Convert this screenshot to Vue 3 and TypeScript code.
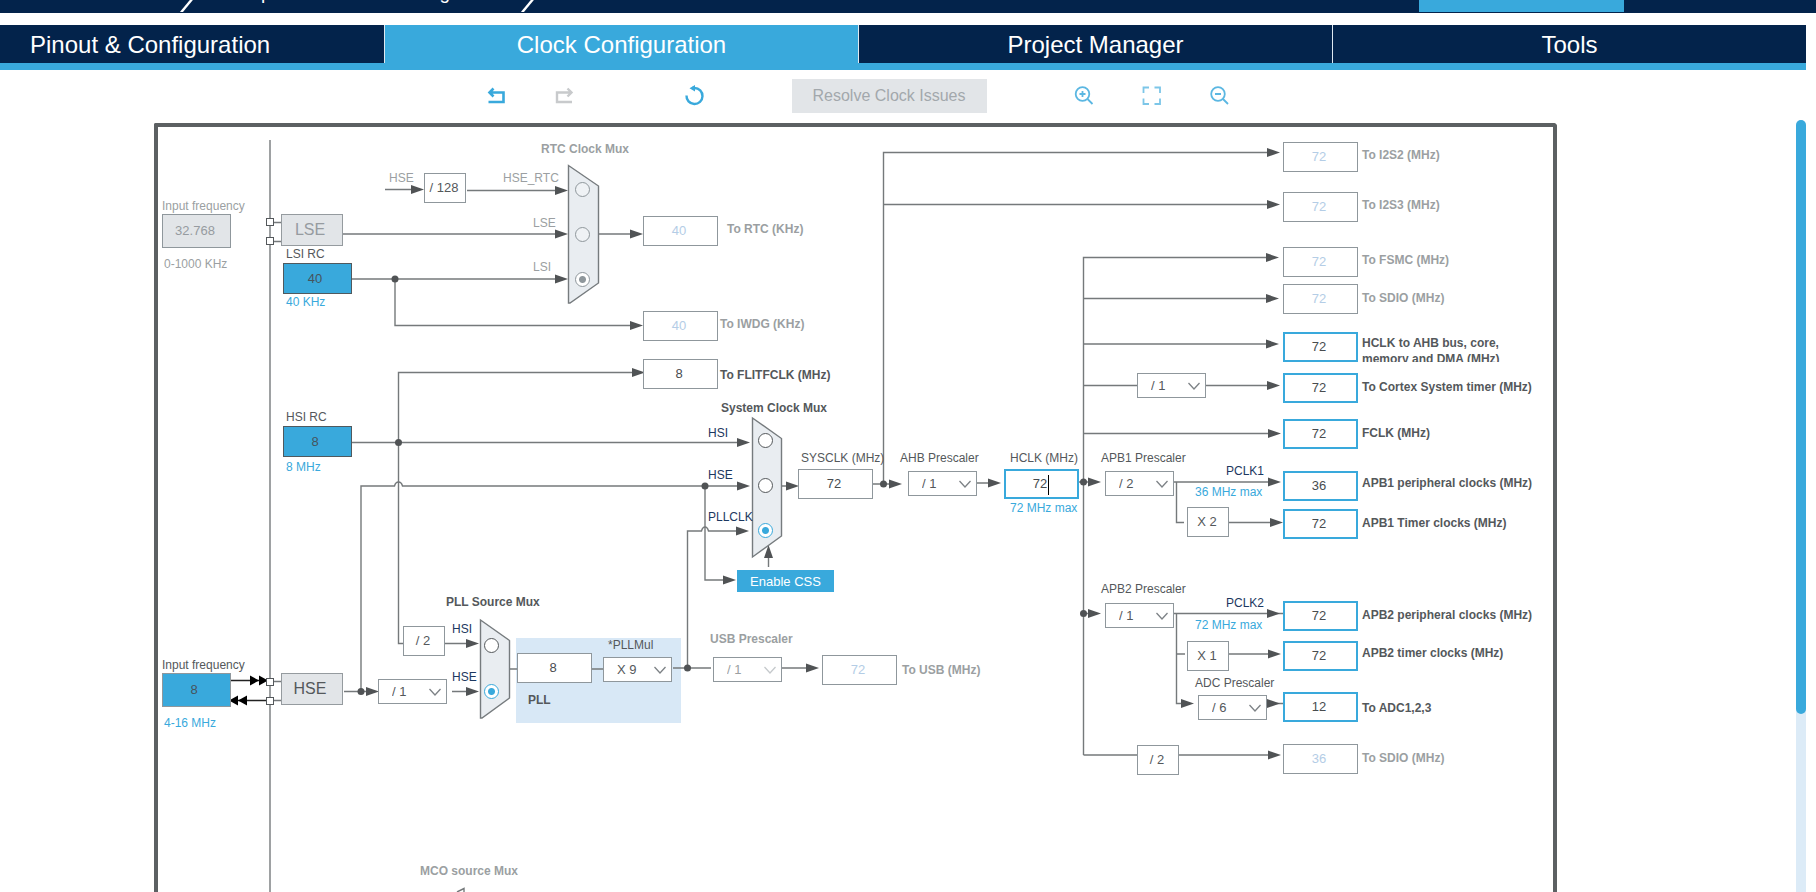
<script setup lang="ts">
import { reactive, ref } from 'vue'

type Tone = 'dark' | 'muted' | 'blue' | 'navy'

interface Label { x: number; y: number; text: string; tone?: Tone; bold?: boolean; for?: string; wide?: boolean }
interface Field { id: string; x: number; y: number; w: number; h: number; value: string; kind: string; name: string; disabled?: boolean }
interface Picker { id: string; x: number; y: number; value: string; options: string[]; disabled?: boolean; name: string }
interface Ratio { x: number; y: number; text: string }
interface Choice { id: string; x: number; y: number; value: string }
interface Mux { name: string; shape: string; disabled?: boolean; picked: string; choices: Choice[] }
interface Arrow { x: number; y: number; turn?: number; black?: boolean }

/* Sheet coordinates of the visible top-left corner. */
const originX = 158
const originY = 127

const tabs = ['Pinout & Configuration', 'Clock Configuration', 'Project Manager', 'Tools']
const activeTab = ref('Clock Configuration')

const place = (x: number, y: number) => ({ left: `${x - originX}px`, top: `${y - originY}px` })
const placeBox = (b: { x: number; y: number; w: number; h: number }) => ({
  ...place(b.x, b.y), width: `${b.w}px`, height: `${b.h}px`,
})

const labels: Label[] = [
  { x: 162, y: 206, text: 'Input frequency', tone: 'muted', for: 'lse-in' },
  { x: 164, y: 264, text: '0-1000 KHz', tone: 'muted' },
  { x: 286, y: 254, text: 'LSI RC', for: 'lsi' },
  { x: 286, y: 302, text: '40 KHz', tone: 'blue' },
  { x: 389, y: 178, text: 'HSE', tone: 'muted' },
  { x: 503, y: 178, text: 'HSE_RTC', tone: 'muted', for: 'rtc-hse' },
  { x: 533, y: 223, text: 'LSE', tone: 'muted', for: 'rtc-lse' },
  { x: 533, y: 267, text: 'LSI', tone: 'muted', for: 'rtc-lsi' },
  { x: 541, y: 149, text: 'RTC Clock Mux', tone: 'muted', bold: true },
  { x: 727, y: 229, text: 'To RTC (KHz)', tone: 'muted', bold: true, for: 'rtc' },
  { x: 720, y: 324, text: 'To IWDG (KHz)', tone: 'muted', bold: true, for: 'iwdg' },
  { x: 720, y: 375, text: 'To FLITFCLK (MHz)', bold: true, for: 'flitf' },
  { x: 721, y: 408, text: 'System Clock Mux', bold: true },
  { x: 708, y: 433, text: 'HSI', tone: 'navy', for: 'sys-hsi' },
  { x: 708, y: 475, text: 'HSE', tone: 'navy', for: 'sys-hse' },
  { x: 708, y: 517, text: 'PLLCLK', tone: 'navy', for: 'sys-pll' },
  { x: 286, y: 417, text: 'HSI RC', for: 'hsi' },
  { x: 286, y: 467, text: '8 MHz', tone: 'blue' },
  { x: 446, y: 602, text: 'PLL Source Mux', bold: true },
  { x: 452, y: 629, text: 'HSI', tone: 'navy', for: 'pll-hsi' },
  { x: 452, y: 677, text: 'HSE', tone: 'navy', for: 'pll-hse' },
  { x: 162, y: 665, text: 'Input frequency', for: 'hse-in' },
  { x: 164, y: 723, text: '4-16 MHz', tone: 'blue' },
  { x: 608, y: 645, text: '*PLLMul', for: 'pllmul' },
  { x: 528, y: 700, text: 'PLL', bold: true, for: 'pll' },
  { x: 710, y: 639, text: 'USB Prescaler', tone: 'muted', bold: true, for: 'usbdiv' },
  { x: 902, y: 670, text: 'To USB (MHz)', tone: 'muted', bold: true, for: 'usb' },
  { x: 420, y: 871, text: 'MCO source Mux', tone: 'muted', bold: true },
  { x: 801, y: 458, text: 'SYSCLK (MHz)', for: 'sysclk' },
  { x: 900, y: 458, text: 'AHB Prescaler', for: 'ahb' },
  { x: 1010, y: 458, text: 'HCLK (MHz)', for: 'hclk' },
  { x: 1010, y: 508, text: '72 MHz max', tone: 'blue' },
  { x: 1101, y: 458, text: 'APB1 Prescaler', for: 'apb1' },
  { x: 1226, y: 471, text: 'PCLK1', tone: 'navy' },
  { x: 1195, y: 492, text: '36 MHz max', tone: 'blue' },
  { x: 1101, y: 589, text: 'APB2 Prescaler', for: 'apb2' },
  { x: 1226, y: 603, text: 'PCLK2', tone: 'navy' },
  { x: 1195, y: 625, text: '72 MHz max', tone: 'blue' },
  { x: 1195, y: 683, text: 'ADC Prescaler', for: 'adcdiv' },
  { x: 1362, y: 155, text: 'To I2S2 (MHz)', tone: 'muted', bold: true, for: 'i2s2' },
  { x: 1362, y: 205, text: 'To I2S3 (MHz)', tone: 'muted', bold: true, for: 'i2s3' },
  { x: 1362, y: 260, text: 'To FSMC (MHz)', tone: 'muted', bold: true, for: 'fsmc' },
  { x: 1362, y: 298, text: 'To SDIO (MHz)', tone: 'muted', bold: true, for: 'sdio' },
  { x: 1362, y: 343, text: 'HCLK to AHB bus, core, memory and DMA (MHz)', bold: true, for: 'ahbbus', wide: true },
  { x: 1362, y: 387, text: 'To Cortex System timer (MHz)', bold: true, for: 'cortex' },
  { x: 1362, y: 433, text: 'FCLK (MHz)', bold: true, for: 'fclk' },
  { x: 1362, y: 483, text: 'APB1 peripheral clocks (MHz)', bold: true, for: 'apb1p' },
  { x: 1362, y: 523, text: 'APB1 Timer clocks (MHz)', bold: true, for: 'apb1t' },
  { x: 1362, y: 615, text: 'APB2 peripheral clocks (MHz)', bold: true, for: 'apb2p' },
  { x: 1362, y: 653, text: 'APB2 timer clocks (MHz)', bold: true, for: 'apb2t' },
  { x: 1362, y: 708, text: 'To ADC1,2,3', bold: true, for: 'adc' },
  { x: 1362, y: 758, text: 'To SDIO (MHz)', tone: 'muted', bold: true, for: 'sdio2' },
]

const output = (id: string, y: number, name: string, value = '72', kind = 'used'): Field => ({
  id, x: 1283, y, w: 75, h: 30, value, kind, name, disabled: kind === 'off',
})

const fields = reactive<Field[]>([
  { id: 'lse-in', x: 162, y: 214, w: 69, h: 34, value: '32.768', kind: 'inactive', name: 'LSE input frequency', disabled: true },
  { id: 'lsi', x: 283, y: 263, w: 69, h: 31, value: '40', kind: 'source', name: 'LSI RC' },
  { id: 'hsi', x: 283, y: 426, w: 69, h: 31, value: '8', kind: 'source', name: 'HSI RC' },
  { id: 'hse-in', x: 162, y: 673, w: 69, h: 34, value: '8', kind: 'source entry', name: 'HSE input frequency' },
  { id: 'rtc', x: 643, y: 216, w: 75, h: 30, value: '40', kind: 'off', name: 'RTC clock', disabled: true },
  { id: 'iwdg', x: 643, y: 311, w: 75, h: 30, value: '40', kind: 'off', name: 'IWDG clock', disabled: true },
  { id: 'flitf', x: 643, y: 359, w: 75, h: 30, value: '8', kind: 'plain', name: 'FLITFCLK' },
  { id: 'sysclk', x: 798, y: 469, w: 75, h: 30, value: '72', kind: 'plain', name: 'SYSCLK' },
  { id: 'hclk', x: 1004, y: 469, w: 75, h: 30, value: '72', kind: 'used', name: 'HCLK' },
  { id: 'pll', x: 517, y: 653, w: 75, h: 30, value: '8', kind: 'plain', name: 'PLL input' },
  { id: 'usb', x: 822, y: 655, w: 75, h: 30, value: '72', kind: 'off', name: 'USB clock', disabled: true },
  output('i2s2', 142, 'I2S2', '72', 'off'),
  output('i2s3', 192, 'I2S3', '72', 'off'),
  output('fsmc', 247, 'FSMC', '72', 'off'),
  output('sdio', 284, 'SDIO', '72', 'off'),
  output('ahbbus', 332, 'AHB bus'),
  output('cortex', 373, 'Cortex system timer'),
  output('fclk', 419, 'FCLK'),
  output('apb1p', 471, 'APB1 peripheral', '36'),
  output('apb1t', 509, 'APB1 timer'),
  output('apb2p', 601, 'APB2 peripheral'),
  output('apb2t', 641, 'APB2 timer'),
  output('adc', 692, 'ADC', '12'),
  output('sdio2', 744, 'SDIO half rate', '36', 'off'),
])

const powers = ['/ 1', '/ 2', '/ 4', '/ 8', '/ 16']
const pickers = reactive<Picker[]>([
  { id: 'hsediv', x: 378, y: 679, value: '/ 1', options: ['/ 1', '/ 2'], name: 'HSE divider' },
  { id: 'pllmul', x: 603, y: 657, value: 'X 9', options: ['X 2', 'X 4', 'X 8', 'X 9', 'X 16'], name: 'PLL multiplier' },
  { id: 'usbdiv', x: 713, y: 657, value: '/ 1', options: ['/ 1', '/ 1.5'], disabled: true, name: 'USB prescaler' },
  { id: 'ahb', x: 908, y: 471, value: '/ 1', options: powers, name: 'AHB prescaler' },
  { id: 'cortexdiv', x: 1137, y: 373, value: '/ 1', options: ['/ 1', '/ 8'], name: 'Cortex timer divider' },
  { id: 'apb1', x: 1105, y: 471, value: '/ 2', options: powers, name: 'APB1 prescaler' },
  { id: 'apb2', x: 1105, y: 603, value: '/ 1', options: powers, name: 'APB2 prescaler' },
  { id: 'adcdiv', x: 1198, y: 695, value: '/ 6', options: ['/ 2', '/ 4', '/ 6', '/ 8'], name: 'ADC prescaler' },
])

const ratios: Ratio[] = [
  { x: 424, y: 173, text: '/ 128' },
  { x: 403, y: 626, text: '/ 2' },
  { x: 1187, y: 507, text: 'X 2' },
  { x: 1187, y: 641, text: 'X 1' },
  { x: 1137, y: 745, text: '/ 2' },
]

const muxes = reactive<Mux[]>([
  {
    name: 'rtc-mux', disabled: true, picked: 'LSI', shape: '568.5,165.5 598.5,186 598.5,283 570,303 568.5,303',
    choices: [
      { id: 'rtc-hse', x: 583, y: 190, value: 'HSE_RTC' },
      { id: 'rtc-lse', x: 583, y: 235, value: 'LSE' },
      { id: 'rtc-lsi', x: 583, y: 280, value: 'LSI' },
    ],
  },
  {
    name: 'sys-mux', picked: 'PLLCLK', shape: '752.5,418 781.5,438.5 781.5,536 752.5,557',
    choices: [
      { id: 'sys-hsi', x: 766, y: 441, value: 'HSI' },
      { id: 'sys-hse', x: 766, y: 486, value: 'HSE' },
      { id: 'sys-pll', x: 766, y: 531, value: 'PLLCLK' },
    ],
  },
  {
    name: 'pll-mux', picked: 'HSE', shape: '480.5,620 509.5,640.5 509.5,698 482,718 480.5,718',
    choices: [
      { id: 'pll-hsi', x: 492, y: 646, value: 'HSI' },
      { id: 'pll-hse', x: 492, y: 692, value: 'HSE' },
    ],
  },
])

const wires: string[] = [
  'M270 140V900',
  'M274 222.5H281M274 241.5H281M274 681.5H281M274 700.5H281',
  'M343 234H560',
  'M352 279H560M395 279V325.5H635',
  'M385 189.5H416M467 190.5H560',
  'M598 234H635',
  'M635 372.5H398.5V643.5H403',
  'M352 442.5H742',
  'M361 691.5V486H394.5Q395.5 482 398.5 482Q401.5 482 402.5 486H742',
  'M344 691.5H370M452 691.5H470M445 643.5H470',
  'M509 669H517M592 669H603M673 668H711M781 668H812',
  'M687.5 668V531H701.5Q702.5 527 705 527Q707.5 527 708.5 531H742',
  'M705 486V580H728',
  'M768.5 567V552',
  'M781 486H792M873 484H894M976 483H994',
  'M883.5 484V152.5H1272M883.5 204.5H1272',
  'M1083.5 755V257.5H1270M1083.5 298.5H1270M1083.5 344H1270M1083.5 385.5H1137M1205 385.5H1272M1083.5 433.5H1274',
  'M1079 482H1092M1174 482H1272M1176.5 482V522.5H1184M1229 522.5H1274',
  'M1083.5 613.5H1092M1174 613.5H1283M1176.5 613.5V703.5H1186M1176.5 654H1185M1229 654H1272M1267 703.5H1283',
  'M1083.5 755H1137M1179 755H1272',
]

const arrows: Arrow[] = [
  { x: 424, y: 189.5 }, { x: 568, y: 190.5 }, { x: 568, y: 234 }, { x: 568, y: 279 },
  { x: 643, y: 234 }, { x: 643, y: 325.5 }, { x: 645, y: 372.5 },
  { x: 750, y: 442.5 }, { x: 750, y: 486 }, { x: 749, y: 531 }, { x: 736, y: 580 },
  { x: 768.5, y: 545, turn: -90 },
  { x: 799, y: 486 }, { x: 902, y: 484 }, { x: 1001, y: 483 },
  { x: 479, y: 643.5 }, { x: 479, y: 691.5 }, { x: 379, y: 691.5 }, { x: 819, y: 668 },
  { x: 1280, y: 152.5 }, { x: 1280, y: 204.5 }, { x: 1279, y: 257.5 }, { x: 1279, y: 298.5 },
  { x: 1279, y: 344 }, { x: 1280, y: 385.5 }, { x: 1281, y: 433.5 }, { x: 1281, y: 482 },
  { x: 1283, y: 522.5 }, { x: 1101, y: 482 }, { x: 1101, y: 613.5 }, { x: 1280, y: 613.5 },
  { x: 1281, y: 654 }, { x: 1280, y: 703.5 }, { x: 1194, y: 703.5 }, { x: 1281, y: 755 },
  { x: 259, y: 680.5, black: true }, { x: 268, y: 680.5, black: true },
  { x: 229, y: 700.5, turn: 180, black: true }, { x: 238, y: 700.5, turn: 180, black: true },
]

const dots: [number, number][] = [
  [395, 279], [398.5, 442.5], [361, 691.5], [705, 486], [687.5, 668],
  [883.5, 484], [1083.5, 482], [1083.5, 613.5],
]

const pins: [number, number][] = [[266.5, 218.5], [266.5, 237.5], [266.5, 678.5], [266.5, 697.5]]
</script>

<template>
  <div class="page">
    <header class="crumbs">
      <svg class="slash" viewBox="0 0 16 12"><path d="M13 -2L1 12.500" /></svg>
      <span class="crumb">setup.ioc - Pinout &amp; Configuration</span>
      <svg class="slash" viewBox="0 0 16 12"><path d="M13 -2L1 12.500" /></svg>
      <button class="generate" type="button" aria-label="Generate code"></button>
    </header>

    <nav class="tabs">
      <button
        v-for="tab in tabs" :key="tab" type="button" class="tab"
        :class="{ active: tab === activeTab }" @click="activeTab = tab"
      >{{ tab }}</button>
    </nav>

    <div class="toolbar">
      <button class="icon" type="button" aria-label="Undo">
        <svg viewBox="0 0 20 20"><path d="M3 6.500H16.500V16H1.500M6.500 2.500L2.500 6.500L6.500 10.500" stroke-width="2.600" /></svg>
      </button>
      <button class="icon redo" type="button" aria-label="Redo" disabled>
        <svg viewBox="0 0 20 20"><path d="M16 6.500H2V16H17M12.500 2.500L16.500 6.500L12.500 10.500" stroke-width="2.400" /></svg>
      </button>
      <button class="icon reset" type="button" aria-label="Reset">
        <svg viewBox="0 0 20 20">
          <path d="M1.500 9.500A8 8 0 1 0 9.500 2H7" stroke-width="2.400" />
          <path class="solid" d="M4.500 2.200L10 -1V5.500Z" />
        </svg>
      </button>
      <button class="resolve" type="button" disabled>Resolve Clock Issues</button>
      <button class="icon" type="button" aria-label="Zoom in">
        <svg viewBox="0 0 20 20" class="thin"><circle cx="8.500" cy="8" r="6.800" /><path d="M13.500 13L18.500 18M8.500 5V11M5.500 8H11.500" /></svg>
      </button>
      <button class="icon" type="button" aria-label="Fit to window">
        <svg viewBox="0 0 20 20" class="thin pale"><path d="M7 1.500H1.500V7M12.500 1.500H18V7M1.500 12.500V18H7M18 12.500V18H12.500" /></svg>
      </button>
      <button class="icon" type="button" aria-label="Zoom out">
        <svg viewBox="0 0 20 20" class="thin"><circle cx="8" cy="8" r="6.800" /><path d="M13 13L18 18M5 8H11" /></svg>
      </button>
    </div>

    <main class="workspace">
      <section class="sheet" aria-label="Clock tree">
        <div class="panel" :style="placeBox({ x: 516, y: 638, w: 165, h: 85 })"></div>

        <svg class="wiring" width="1395" height="780">
          <g :transform="`translate(${-originX} ${-originY})`">
            <path v-for="(d, i) in wires" :key="i" :d="d" class="wire" />
            <path class="wire strong" d="M230 680.500H262M270 700.500H232" />
            <path
              v-for="(a, i) in arrows" :key="`a${i}`"
              :d="a.black ? 'M0 0L-9 -5V5Z' : 'M0 0L-13 -4.500V4.500Z'"
              class="head" :class="{ black: a.black }"
              :transform="`translate(${a.x} ${a.y}) rotate(${a.turn ?? 0})`"
            />
            <circle v-for="(d, i) in dots" :key="`d${i}`" :cx="d[0]" :cy="d[1]" r="3.500" class="head" />
            <rect v-for="(p, i) in pins" :key="`p${i}`" :x="p[0]" :y="p[1]" width="7" height="7" class="pin" />
            <polygon v-for="m in muxes" :key="m.name" :points="m.shape" class="mux" />
            <path class="wire" d="M457 892L464 888.500V892" />
          </g>
        </svg>

        <component
          :is="l.for ? 'label' : 'span'" v-for="(l, i) in labels" :key="i" :for="l.for"
          class="label" :class="[l.tone ?? 'dark', { bold: l.bold, wide: l.wide }]"
          :style="place(l.x, l.y - 8)"
        >{{ l.text }}</component>

        <button type="button" class="osc" disabled :style="place(281, 214)">LSE</button>
        <button type="button" class="osc live" :style="place(281, 673)">HSE</button>
        <button type="button" class="css" :style="place(737, 570)">Enable CSS</button>

        <input
          v-for="f in fields" :id="f.id" :key="f.id" v-model="f.value" type="text"
          class="field" :class="f.kind" :style="placeBox(f)" :disabled="f.disabled" :aria-label="f.name"
        >
        <i class="caret" :style="place(1048, 475)"></i>

        <div v-for="(r, i) in ratios" :key="i" class="ratio" :style="place(r.x, r.y)">{{ r.text }}</div>

        <div v-for="p in pickers" :key="p.id" class="picker" :class="{ off: p.disabled }" :style="place(p.x, p.y)">
          <select :id="p.id" v-model="p.value" :disabled="p.disabled" :aria-label="p.name">
            <option v-for="o in p.options" :key="o">{{ o }}</option>
          </select>
          <svg viewBox="0 0 12 8"><path d="M0.500 1L6 7L11.500 1" /></svg>
        </div>

        <template v-for="m in muxes" :key="m.name">
          <input
            v-for="c in m.choices" :id="c.id" :key="c.id" v-model="m.picked" type="radio" class="radio"
            :name="m.name" :value="c.value" :disabled="m.disabled" :aria-label="c.value"
            :style="place(c.x - 8, c.y - 8)"
          >
        </template>
      </section>
      <div class="scroll"><div class="thumb"></div></div>
    </main>
  </div>
</template>

<style>
body { background: #fff; }
</style>

<style scoped>
.page {
  display: flex;
  flex-direction: column;
  height: 100vh;
  overflow: hidden;
  font-family: "Liberation Sans", Arial, sans-serif;
  color: #54585b;
}
.page *, .page *::before { box-sizing: border-box; }
button, input, select { font-family: inherit; margin: 0; padding: 0; }

.crumbs {
  display: flex;
  align-items: flex-end;
  flex: none;
  height: 13px;
  padding: 0 192px 0 180px;
  background: #03234b;
  overflow: hidden;
}
.slash { width: 16px; height: 12px; flex: none; margin-bottom: 1px; }
.slash path { fill: none; stroke: #fff; stroke-width: 2.4; }
.crumb {
  width: 325px;
  padding: 0 0 10px 29px;
  font-size: 19px;
  line-height: 20px;
  color: #fff;
  white-space: nowrap;
}
.generate {
  width: 205px;
  height: 12px;
  margin: 0 0 1px auto;
  border: 0;
  background: #39a9dc;
}

.tabs {
  display: grid;
  grid-template-columns: 384fr 474fr 474fr 474fr;
  flex: none;
  margin: 12px 10px 0 0;
  border-bottom: 7px solid #39a9dc;
}
.tab {
  height: 38px;
  border: 0;
  border-left: 1px solid #dfe8f0;
  background: #03234b;
  color: #fff;
  font-size: 24px;
  line-height: 40px;
}
.tab:first-child { border-left: 0; padding-left: 30px; text-align: left; }
.tab.active { background: #39a9dc; }

.toolbar {
  display: flex;
  align-items: center;
  justify-content: center;
  flex: none;
  gap: 48px;
  height: 53px;
  padding: 0 100px 1px 0;
}
.icon { width: 20px; height: 20px; border: 0; background: none; }
.icon svg { display: block; width: 20px; height: 20px; fill: none; stroke: #39a9dc; overflow: visible; }
.icon .solid { fill: #39a9dc; stroke: none; }
.icon .thin { stroke: #5bb7e2; stroke-width: 1.8; }
.icon .pale { stroke: #7cc6e8; }
.redo svg { stroke: #c8cacc; }
.reset { margin-left: 62px; }
.resolve {
  height: 34px;
  width: 195px;
  margin: 0 39px;
  border: 0;
  background: #e2e5e8;
  color: #a2a8ac;
  font-size: 16px;
}

.workspace {
  display: flex;
  flex: 1;
  min-height: 0;
  padding: 0 10px 0 154px;
}
.sheet {
  position: relative;
  flex: 1;
  border: 4px solid #5c6062;
  border-bottom: 0;
  border-radius: 2px 4px 0 0;
  overflow: hidden;
}
.scroll {
  width: 10px;
  margin: -3px 0 0 239px;
  border-radius: 5px 5px 0 0;
  background: #dcebf7;
}
.thumb { height: 77%; border-radius: 5px; background: #39a9dc; }

.wiring { position: absolute; left: 0; top: 0; }
.wire { fill: none; stroke: #75797b; stroke-width: 1.4; }
.strong { stroke: #222; }
.head { fill: #505355; }
.black { fill: #000; }
.pin { fill: #fff; stroke: #54585b; }
.mux { fill: #e9edf1; stroke: #767b7e; stroke-width: 1.4; }

.panel { position: absolute; background: #d8e8f6; }

.label {
  position: absolute;
  font-size: 12px;
  line-height: 16px;
  white-space: nowrap;
}
.bold { font-weight: bold; }
.muted { color: #9b9fa2; }
.blue { color: #39a9dc; }
.navy { color: #1c3860; }
.wide { width: 160px; height: 27px; white-space: normal; overflow: hidden; }

.osc {
  position: absolute;
  width: 62px;
  height: 32px;
  padding-right: 4px;
  border: 1px solid #959b9f;
  background: #e2e5e8;
  color: #969ba0;
  font-size: 16px;
}
.osc.live { color: #54585b; }
.css {
  position: absolute;
  width: 97px;
  height: 22px;
  border: 0;
  background: #39a9dc;
  color: #fff;
  font-size: 13px;
}

.field {
  position: absolute;
  padding: 0 3px 1px 0;
  border: 1px solid #8f979c;
  border-radius: 0;
  background: #fff;
  color: #484c4f;
  font-size: 13px;
  text-align: center;
  outline: 0;
}
.off { color: #b4cde6; }
.used { border: 2px solid #39a9dc; }
.source { padding-right: 5px; background: #39a9dc; border-color: #50595e; color: #46545c; }
.entry { border-color: #8f979c; }
.inactive { background: #e2e5e8; color: #969ba0; }
.caret { position: absolute; width: 1px; height: 20px; background: #000; }

.ratio {
  position: absolute;
  width: 42px;
  height: 30px;
  padding-right: 2px;
  border: 1px solid #8f979c;
  background: #fff;
  font-size: 13px;
  line-height: 28px;
  text-align: center;
}

.picker { position: absolute; width: 69px; height: 25px; }
.picker select {
  appearance: none;
  width: 100%;
  height: 100%;
  padding-left: 13px;
  border: 1px solid #8f979c;
  border-radius: 0;
  background: #fff;
  color: #54585b;
  font-size: 13px;
  opacity: 1;
}
.picker svg {
  position: absolute;
  right: 6px;
  top: 9px;
  width: 12px;
  height: 8px;
  fill: none;
  stroke: #7d8286;
  stroke-width: 1.3;
  pointer-events: none;
}
.picker.off select { color: #9b9fa2; }
.picker.off svg { stroke: #c5c9cc; }

.radio {
  position: absolute;
  appearance: none;
  width: 15px;
  height: 15px;
  border: 1px solid #54585b;
  border-radius: 50%;
  background: #fff;
}
.radio:checked {
  border-color: #39a9dc;
  background: radial-gradient(circle, #39a9dc 0 3px, #fff 4px);
}
.radio:disabled { border-color: #8f979c; background: #eff2f5; }
.radio:disabled:checked { background: radial-gradient(circle, #8f979c 0 3px, #fff 4px); }
</style>
